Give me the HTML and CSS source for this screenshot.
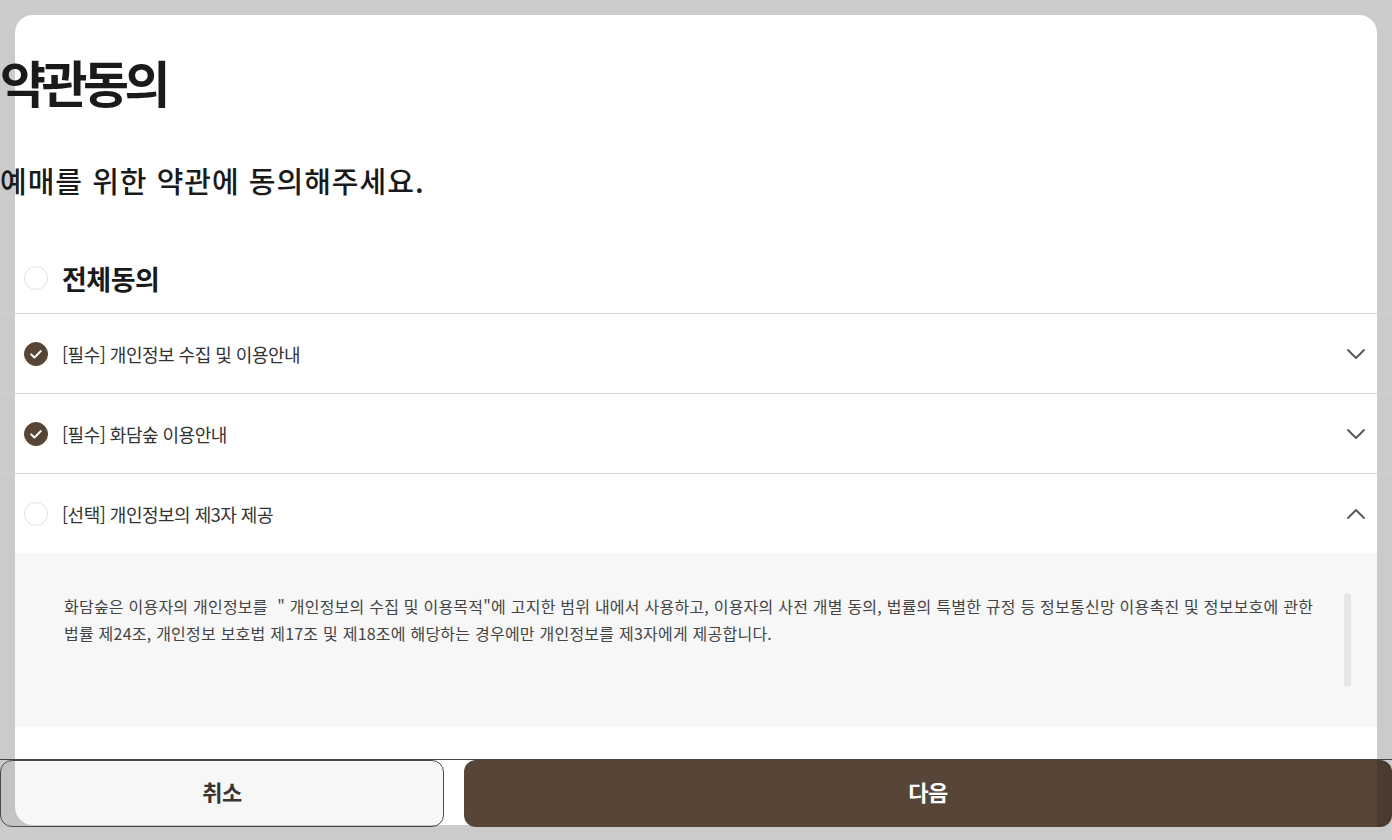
FILE: index.html
```html
<!DOCTYPE html>
<html lang="ko">
<head>
<meta charset="utf-8">
<title>약관동의</title>
<link rel="stylesheet" href="styles.css">
</head>
<body>
<div class="modal">
  <h1 class="title">약관동의</h1>
  <p class="subtitle">예매를 위한 약관에 동의해주세요.</p>

  <div class="all-row">
    <span class="check"></span>
    <span class="all-label">전체동의</span>
  </div>

  <div class="term-row">
    <span class="check checked"><svg viewBox="0 0 24 24" width="24" height="24"><path d="M7.2 12.4l3.2 3.1 6.4-6.4" fill="none" stroke="#fff" stroke-width="2" stroke-linecap="round" stroke-linejoin="round"/></svg></span>
    <span class="term-label">[필수] 개인정보 수집 및 이용안내</span>
    <svg class="chev" viewBox="0 0 20 12" width="20" height="12"><path d="M2 2l8 8 8-8" fill="none" stroke="#555" stroke-width="1.8" stroke-linecap="round" stroke-linejoin="round"/></svg>
  </div>

  <div class="term-row">
    <span class="check checked"><svg viewBox="0 0 24 24" width="24" height="24"><path d="M7.2 12.4l3.2 3.1 6.4-6.4" fill="none" stroke="#fff" stroke-width="2" stroke-linecap="round" stroke-linejoin="round"/></svg></span>
    <span class="term-label">[필수] 화담숲 이용안내</span>
    <svg class="chev" viewBox="0 0 20 12" width="20" height="12"><path d="M2 2l8 8 8-8" fill="none" stroke="#555" stroke-width="1.8" stroke-linecap="round" stroke-linejoin="round"/></svg>
  </div>

  <div class="term-row open">
    <span class="check"></span>
    <span class="term-label">[선택] 개인정보의 제3자 제공</span>
    <svg class="chev" viewBox="0 0 20 12" width="20" height="12"><path d="M2 10l8-8 8 8" fill="none" stroke="#555" stroke-width="1.8" stroke-linecap="round" stroke-linejoin="round"/></svg>
  </div>

  <div class="detail">
    <p class="detail-text">화담숲은 이용자의 개인정보를 &nbsp;" 개인정보의 수집 및 이용목적"에 고지한 범위 내에서 사용하고, 이용자의 사전 개별 동의, 법률의 특별한 규정 등 정보통신망 이용촉진 및 정보보호에 관한<br>법률 제24조, 개인정보 보호법 제17조 및 제18조에 해당하는 경우에만 개인정보를 제3자에게 제공합니다.</p>
    <span class="scroll-thumb"></span>
  </div>

  <div class="footer">
    <button class="btn btn-cancel">취소</button>
    <button class="btn btn-next">다음</button>
  </div>
</div>
</body>
</html>
```

FILE: styles.css
```css
* { box-sizing: border-box; }

html, body {
  margin: 0;
  padding: 0;
  background: #cbcbcb;
  font-family: "Noto Sans CJK KR", "Noto Sans", sans-serif;
  overflow: hidden;
}

.modal {
  margin: 15px;
  height: 810px;
  background: #fff;
  border-radius: 18px;
  padding-top: 36px;
}

.title {
  margin: 0 0 0 -15px;
  font-size: 50px;
  line-height: 60px;
  font-weight: 700;
  letter-spacing: -4.5px;
  color: #1a1a1a;
}

.subtitle {
  margin: 49px 0 0 -15px;
  font-size: 29px;
  line-height: 40px;
  font-weight: 500;
  letter-spacing: 1px;
  color: #1a1a1a;
}

.all-row {
  margin: 43px -15px 0;
  height: 70px;
  display: flex;
  align-items: center;
  padding-left: 24px;
  gap: 14px;
}

.all-label {
  font-size: 27px;
  font-weight: 700;
  letter-spacing: -0.5px;
  color: #1a1a1a;
}

.check {
  width: 24px;
  height: 24px;
  border-radius: 50%;
  border: 1px solid #e2e2e2;
  background: #fff;
  flex: none;
  display: flex;
  align-items: center;
  justify-content: center;
}

.check.checked {
  background: #574537;
  border-color: #574537;
}

.check svg { display: block; flex: none; }

.term-row {
  margin: 0 -15px;
  height: 80px;
  border-top: 1px solid #d3d3d3;
  display: flex;
  align-items: center;
  padding: 0 26px 0 24px;
  gap: 14px;
}

.term-label {
  flex: 1;
  font-size: 18px;
  font-weight: 400;
  letter-spacing: -0.5px;
  color: #333;
}

.chev { flex: none; display: block; }

.detail {
  height: 174px;
  background: #f7f7f7;
  display: flex;
  padding: 40px 26px 0 49px;
}

.detail-text {
  flex: 1;
  margin: 0;
  font-size: 16px;
  line-height: 27px;
  letter-spacing: 0.23px;
  color: #444;
}

.scroll-thumb {
  flex: none;
  width: 7px;
  height: 94px;
  margin-left: 20px;
  border-radius: 4px;
  background: #e6e6e6;
}

.footer {
  margin: 32px -15px 0;
  border-top: 1px solid #444;
  display: grid;
  grid-template-columns: 444px 1fr;
  gap: 20px;
}

.btn {
  height: 67px;
  border-radius: 12px;
  font-family: inherit;
  font-size: 22px;
  line-height: 1;
  padding: 0 0 5px;
  font-weight: 700;
  letter-spacing: -0.5px;
  cursor: pointer;
}

.btn-cancel {
  background: rgba(0, 0, 0, 0.03);
  border: 1px solid #4a4a4a;
  color: #3a3330;
}

.btn-next {
  border: none;
  color: #fff;
  background: linear-gradient(to right, #574537 calc(100% - 15px), #4a3b2f calc(100% - 15px));
}
```
